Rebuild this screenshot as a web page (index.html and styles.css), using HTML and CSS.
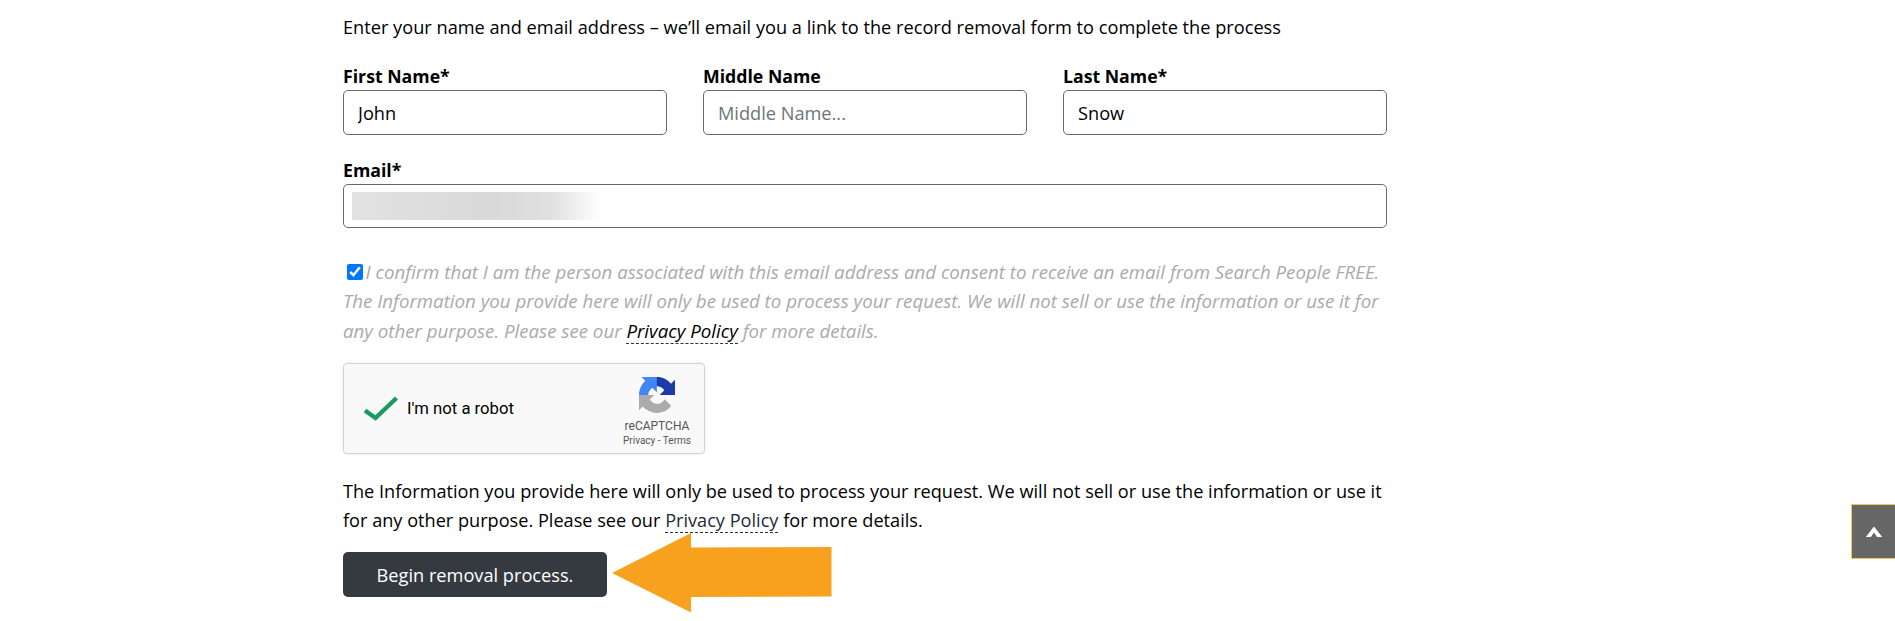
FILE: index.html
```
<!DOCTYPE html>
<html lang="en">
<head>
<meta charset="utf-8">
<title>Record removal</title>
<link rel="stylesheet" href="styles.css">
</head>
<body>
<main class="form">
  <p class="intro">Enter your name and email address – we’ll email you a link to the record removal form to complete the process</p>
  <div class="names">
    <div class="field"><label class="label" for="f">First Name*</label><input class="input" id="f" value="John"></div>
    <div class="field"><label class="label" for="m">Middle Name</label><input class="input" id="m" placeholder="Middle Name..."></div>
    <div class="field"><label class="label" for="l">Last Name*</label><input class="input" id="l" value="Snow"></div>
  </div>
  <div class="field email">
    <label class="label" for="e">Email*</label>
    <div class="email-box"><input class="input" id="e"><span class="blur"></span></div>
  </div>
  <p class="consent"><input class="check" type="checkbox" checked>I confirm that I am the person associated with this email address and consent to receive an email from Search People FREE. The Information you provide here will only be used to process your request. We will not sell or use the information or use it for any other purpose. Please see our <a class="policy dark" href="#">Privacy Policy</a> for more details.</p>
  <div class="captcha">
    <svg class="tick" viewBox="0 0 36 26" width="36" height="26"><path d="M2 14.5L12.5 22 33.5 2" fill="none" stroke="#1a9a5f" stroke-width="4.4"/></svg>
    <span class="robot">I'm not a robot</span>
    <div class="brand">
      <svg class="logo" viewBox="0 0 64 64" width="36" height="36">
        <path d="M64 31.955l-.033-1.37V4.687l-7.16 7.16C50.948 4.674 42.033.093 32.05.093c-10.4 0-19.622 4.96-25.458 12.64l11.736 11.86a15.55 15.55 0 0 1 4.754-5.334c2.05-1.6 4.952-2.906 8.968-2.906.485 0 .86.057 1.135.163 4.976.393 9.288 3.14 11.827 7.125l-8.307 8.307c10.522-.04 22.4-.066 27.295.005" fill="#1c3aa9"/>
        <path d="M31.862.094l-1.37.033H4.594l7.16 7.16C4.58 13.147 0 22.06 0 32.046c0 10.4 4.96 19.622 12.64 25.458l11.86-11.736a15.55 15.55 0 0 1-5.334-4.754c-1.6-2.05-2.906-4.952-2.906-8.968 0-.485.057-.86.163-1.135.393-4.976 3.14-9.288 7.125-11.827l8.307 8.307c-.04-10.522-.066-22.4.005-27.295" fill="#4285f4"/>
        <path d="M.001 32.045l.033 1.37v25.898l7.16-7.16c5.86 7.173 14.774 11.754 24.76 11.754 10.4 0 19.622-4.96 25.458-12.64l-11.86-11.736a15.55 15.55 0 0 1-4.754 5.334c-2.05 1.6-4.952 2.906-8.968 2.906-.485 0-.86-.057-1.135-.163-4.976-.393-9.288-3.14-11.827-7.125l8.307-8.307c-10.522.04-22.4.066-27.295-.005" fill="#ababab"/>
      </svg>
      <span class="re">reCAPTCHA</span>
      <span class="terms">Privacy - Terms</span>
    </div>
  </div>
  <p class="note">The Information you provide here will only be used to process your request. We will not sell or use the information or use it for any other purpose. Please see our <a class="policy" href="#">Privacy Policy</a> for more details.</p>
  <div class="action">
    <button class="begin" type="button">Begin removal process.</button>
    <svg class="arrow" viewBox="0 0 220 80" width="220" height="80"><polygon points="0,40 79,0 79,14.5 219.500,14 219.500,63.500 79,64 79,79.500" fill="#f8a11f"/></svg>
  </div>
</main>
<button class="top" type="button" aria-label="Back to top"><svg viewBox="0 0 18 13" width="18" height="13"><path d="M0.800 12L9 1.500 17.200 12h-5.100L9 7.500 5.900 12z" fill="#fff"/></svg></button>
</body>
</html>
```
FILE: styles.css
```
html, body { margin: 0; padding: 0; height: 100%; overflow: hidden; background: #fff; }
body { font-family: "Open Sans", "Noto Sans", sans-serif; font-size: 18.2px; color: #000; }
.form { width: 1044px; margin-left: 343px; padding-top: 13px; line-height: 29.5px; }
.intro { margin: 0 0 20px; line-height: 29px; }
.names { display: grid; grid-template-columns: repeat(3, 324px); column-gap: 36px; }
.field { display: flex; flex-direction: column; }
.label { font-weight: 700; font-size: 17.7px; line-height: 28px; }
.input { box-sizing: border-box; width: 100%; height: 44.5px; padding: 1px 14px 0; border: 1px solid #6a6a6a; border-radius: 5px; font: 18.2px "Open Sans", "Noto Sans", sans-serif; color: #000; background: #fff; }
.input::placeholder { color: #6c757d; opacity: 1; }
.email { margin-top: 21px; }
.email-box { position: relative; height: 44.5px; }
.blur { position: absolute; left: 9px; top: 8.500px; width: 249px; height: 28px; background: linear-gradient(90deg, #e2e2e2 0, #d9d9d9 55%, #e0e0e0 80%, #fff 100%); }
.consent { margin: 28.5px 0 18px; color: #aaa; font-style: italic; font-size: 18.7px; }
.check { width: 15.500px; height: 15.500px; margin: 0 3px 0 4px; accent-color: #0075ff; vertical-align: -1px; }
.policy { color: #1f2a38; text-decoration: none; border-bottom: 1px dashed #333; }
.policy.dark { color: #000; }
.captcha { box-sizing: border-box; display: flex; align-items: center; width: 362px; height: 91px; padding-left: 19px; background: #f9f9f9; border: 1px solid #d3d3d3; border-radius: 4px; box-shadow: 0 0 4px rgba(0,0,0,.08); }
.tick { flex: none; }
.robot { margin: 1px 0 0 8px; font: 16.700px/1 Roboto, sans-serif; color: #000; }
.brand { display: flex; flex-direction: column; align-items: center; margin-left: auto; width: 70px; margin-right: 12px; margin-top: 7px; font-family: Roboto, sans-serif; color: #555; }
.logo { display: block; }
.re { margin-top: 5px; font-size: 12px; line-height: 16px; }
.terms { font-size: 10px; line-height: 13px; white-space: nowrap; }
.note { margin: 23px 0 16.5px; font-size: 18.15px; line-height: 29px; }
.action { position: relative; }
.begin { display: block; width: 264px; height: 45px; padding: 2px 0 0; border: 0; border-radius: 5px; background: #343a40; color: #fff; font: 18.2px "Open Sans", "Noto Sans", sans-serif; }
.arrow { position: absolute; left: 268.7px; top: -19px; }
.top { position: fixed; right: 0; top: 504px; box-sizing: border-box; display: flex; align-items: center; justify-content: center; width: 44px; height: 54.500px; padding: 0; background: #666; border: 1px solid #f5c75a; border-right: 0; }
```
